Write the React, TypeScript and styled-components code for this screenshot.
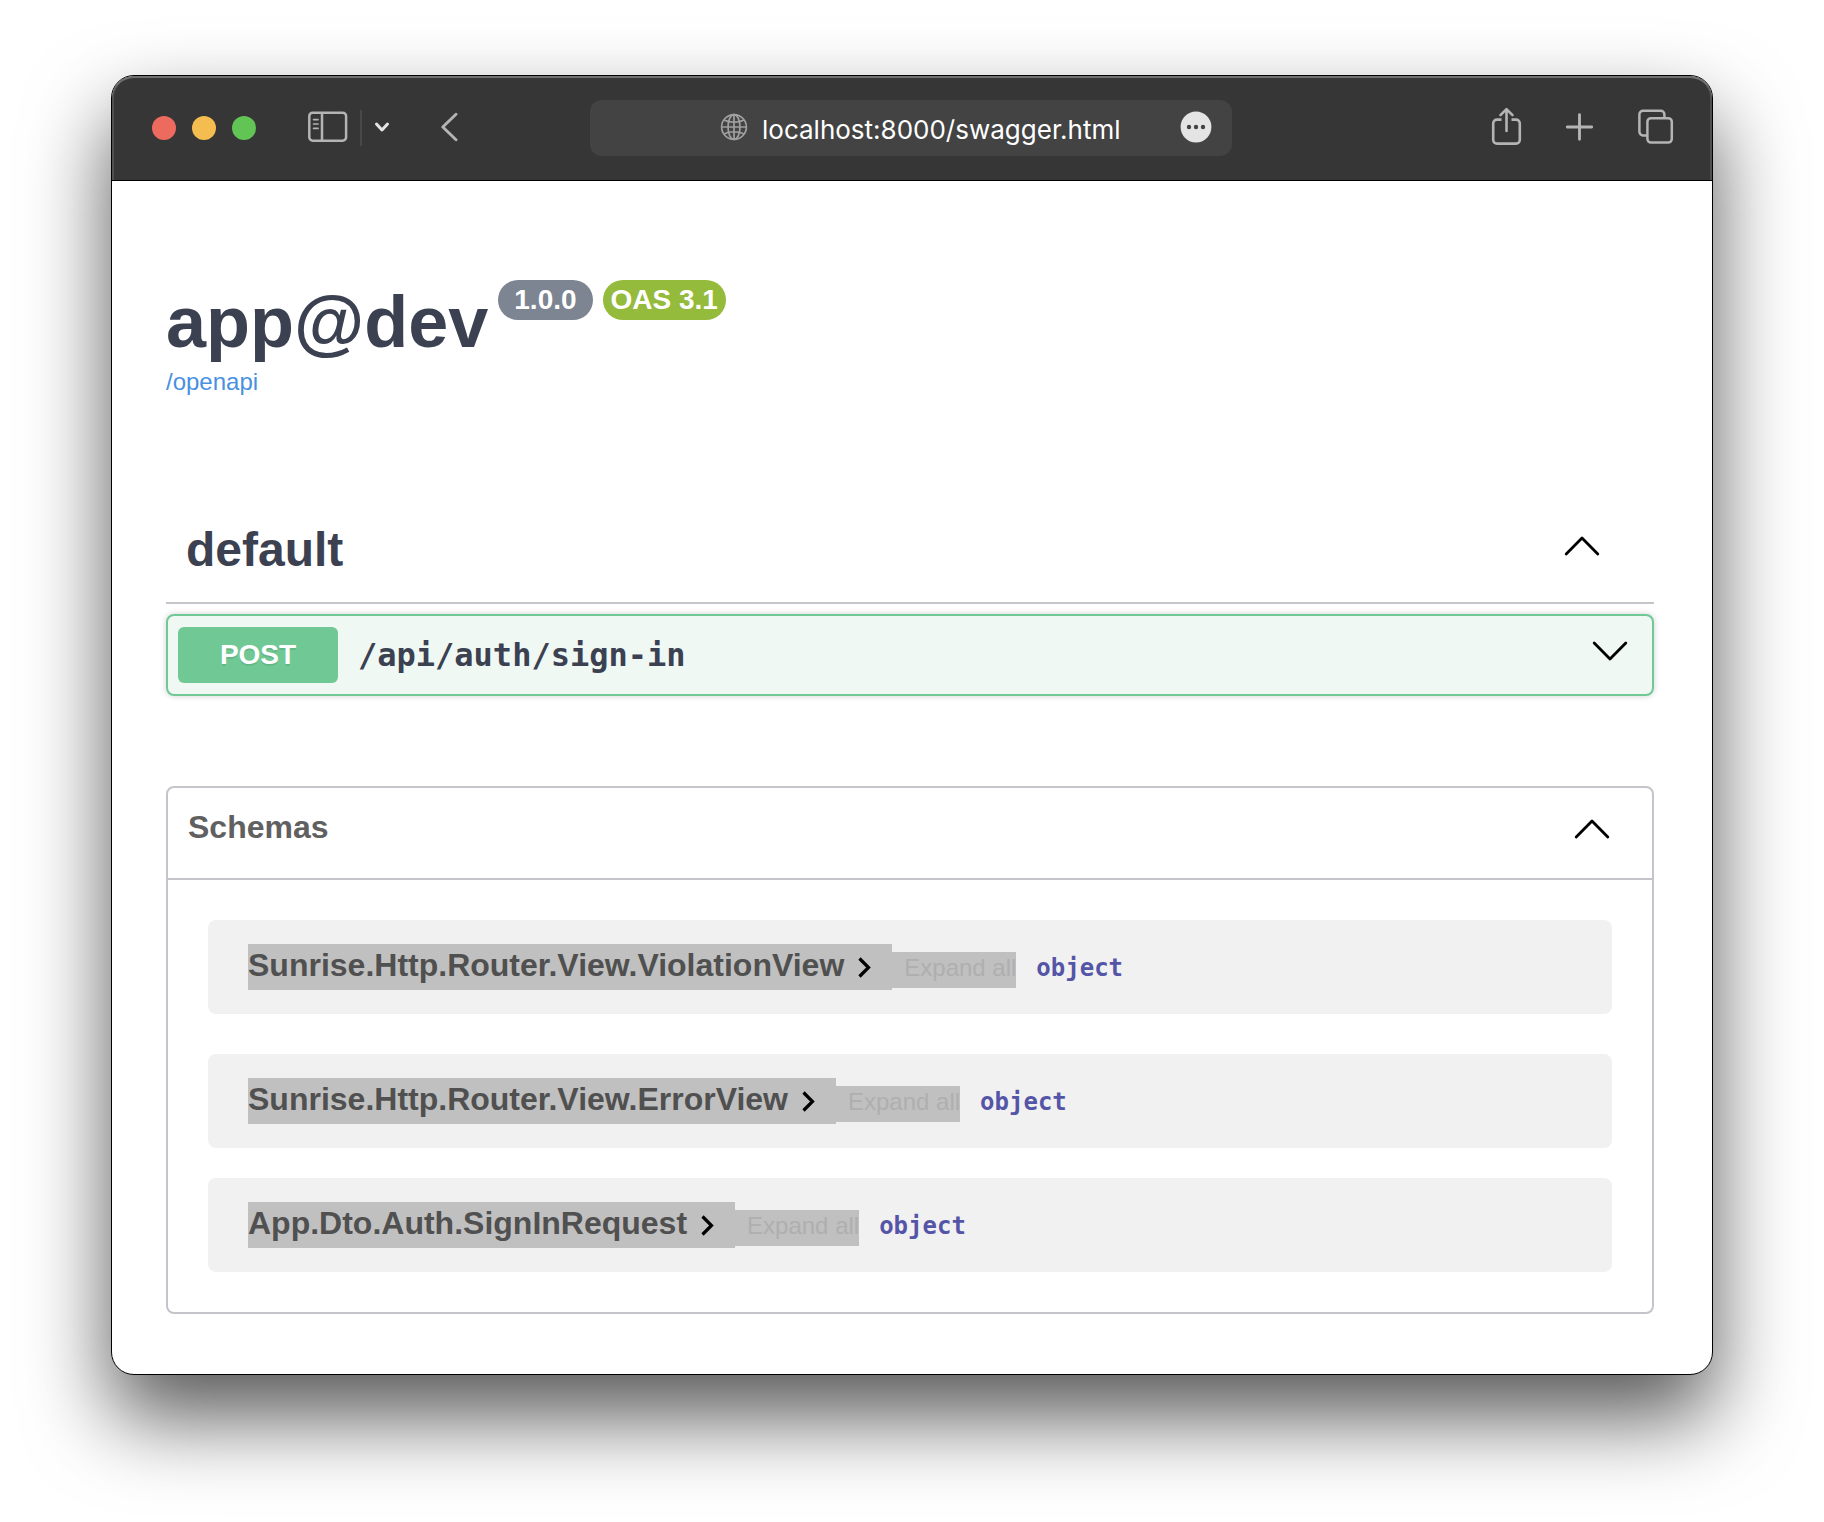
import React, { useState } from "react";
import styled, { createGlobalStyle } from "styled-components";

const sans = `"Liberation Sans", Arial, Helvetica, sans-serif`;
const mono = `"DejaVu Sans Mono", Menlo, monospace`;

const GlobalStyle = createGlobalStyle`
  *, *::before, *::after { box-sizing: border-box; }
  body { margin: 0; background: #fff; font-family: ${sans}; }
  button, input { font: inherit; color: inherit; }
  h1, h2, p { margin: 0; }
`;

const Desktop = styled.main`
  padding: 75px 111px 147px;
`;

const Window = styled.div`
  border: 1px solid #000;
  border-radius: 23px;
  overflow: hidden;
  background: #fff;
  box-shadow: 0 42px 84px rgba(0, 0, 0, 0.66);
`;

const Toolbar = styled.header`
  display: grid;
  grid-template-columns: 1fr minmax(0, 642px) 1fr;
  align-items: center;
  height: 105px;
  padding: 0 38px 0 36px;
  background: #363636;
  border-bottom: 1px solid #000;
  border-radius: 22px 22px 0 0;
  box-shadow: inset 0 2px 0 #707070, inset 2px 0 0 #505050, inset -2px 0 0 #505050;
  color: #b4b4b4;
`;

const ToolGroup = styled.div<{ $end?: boolean }>`
  display: flex;
  align-items: center;
  justify-content: ${(p) => (p.$end ? "flex-end" : "flex-start")};
`;

const TrafficLights = styled.div`
  display: flex;
  gap: 16px;
  margin: 0 52px 0 4px;
`;

const Light = styled.button<{ $color: string }>`
  width: 24px;
  height: 24px;
  padding: 0;
  border: 0;
  border-radius: 50%;
  background: ${(p) => p.$color};
`;

const ToolButton = styled.button<{ $gap?: number }>`
  display: flex;
  padding: 0 0 2px;
  border: 0;
  background: none;
  color: inherit;
  margin-left: ${(p) => p.$gap ?? 0}px;
  svg { display: block; }
`;

const Divider = styled.span`
  width: 2px;
  height: 36px;
  margin-left: 12px;
  background: #484848;
`;

const AddressBar = styled.div`
  display: grid;
  grid-template-columns: 1fr auto 1fr;
  align-items: center;
  height: 56px;
  padding: 0 20px;
  border-radius: 12px;
  background: #434343;
  color: #fff;
`;

const Address = styled.label`
  grid-column: 2;
  display: flex;
  align-items: center;
  gap: 14px;
  margin-left: 22px;
  svg { margin-bottom: 2px; }
`;

const AddressInput = styled.input`
  width: 362px;
  padding: 3px 0 0;
  border: 0;
  outline: 0;
  background: none;
  font: 400 26px/36px Inter, Roboto, sans-serif;
`;

const MoreButton = styled(ToolButton)`
  justify-self: end;
`;

const Page = styled.div`
  padding: 99px 58px 60px 54px;
`;

const TitleRow = styled.div`
  display: flex;
  align-items: flex-start;
  padding-bottom: 4px;
`;

const Title = styled.h1`
  font-size: 72px;
  line-height: 84px;
  color: #3b4151;
`;

const Badges = styled.div`
  display: flex;
  gap: 10px;
  margin-left: 10px;
`;

const Badge = styled.span<{ $color: string; $pad: number }>`
  padding: 0 ${(p) => p.$pad}px;
  border-radius: 20px;
  background: ${(p) => p.$color};
  color: #fff;
  font-size: 28px;
  line-height: 40px;
  font-weight: 700;
`;

const SpecLink = styled.a`
  display: inline-block;
  font-size: 24px;
  line-height: 28px;
  color: #4990e2;
  text-decoration: none;
`;

const TagHeader = styled.div`
  display: flex;
  align-items: center;
  justify-content: space-between;
  height: 106px;
  margin-top: 102px;
  padding: 0 52px 0 20px;
  border-bottom: 2px solid #c4c4cb;
`;

const TagTitle = styled.h2`
  font-size: 48px;
  line-height: 56px;
  color: #3b4151;
`;

const IconButton = styled.button`
  display: flex;
  padding: 0 0 8px;
  border: 0;
  background: none;
  color: #000;
  svg { display: block; }
`;

const Operation = styled.button`
  display: flex;
  align-items: center;
  width: 100%;
  margin-top: 10px;
  padding: 11px 22px 11px 10px;
  border: 2px solid #70c995;
  border-radius: 8px;
  background: #eff8f3;
  box-shadow: 0 0 6px rgba(0, 0, 0, 0.19);
  text-align: left;
  svg { display: block; margin: 0 0 8px auto; color: #000; }
`;

const Method = styled.span`
  width: 160px;
  border-radius: 6px;
  background: #70c995;
  color: #fff;
  font-size: 28px;
  line-height: 56px;
  font-weight: 700;
  text-align: center;
  text-shadow: 0 2px 0 rgba(0, 0, 0, 0.1);
`;

const Path = styled.span`
  margin-left: 20px;
  font: 700 32px/40px ${mono};
  color: #3b4151;
`;

const Schemas = styled.section`
  margin-top: 90px;
  border: 2px solid #c4c4cb;
  border-radius: 8px;
`;

const SchemasHeader = styled.div`
  display: flex;
  align-items: center;
  justify-content: space-between;
  height: 92px;
  padding: 0 40px 0 20px;
  border-bottom: 2px solid #c4c4cb;
`;

const SchemasTitle = styled.h2`
  padding-bottom: 12px;
  font-size: 32px;
  line-height: 36px;
  color: #606060;
`;

const SchemaList = styled.div`
  padding: 40px;
`;

const SchemaRow = styled.article<{ $gap: number }>`
  display: flex;
  align-items: center;
  height: 94px;
  margin-bottom: ${(p) => p.$gap}px;
  padding: 0 40px;
  border-radius: 8px;
  background: #f1f1f1;
`;

const SchemaName = styled.button`
  display: flex;
  align-items: center;
  height: 46px;
  padding: 0 16px 0 0;
  border: 0;
  background: #c0c0c0;
  color: #505050;
  font-size: 32px;
  line-height: 42px;
  font-weight: 700;
  svg { display: block; margin-left: 8px; color: #000; }
`;

const SchemaLabel = styled.span`
  padding-bottom: 4px;
`;

const ExpandAll = styled.button`
  height: 36px;
  margin-top: 6px;
  padding: 0 0 4px 12px;
  border: 0;
  background: #c0c0c0;
  color: #afafaf;
  font-size: 24px;
  line-height: 28px;
`;

const TypeName = styled.span`
  margin: 2px 0 0 20px;
  font: 700 24px/28px ${mono};
  color: #5555a8;
`;

const Chevron = ({ down }: { down?: boolean }) => (
  <svg width="40" height="40" viewBox="0 0 40 40" fill="none" stroke="currentColor" strokeWidth="2.8" strokeLinecap="round" strokeLinejoin="round" aria-hidden="true">
    <path d={down ? "M4.200 12 20 28 35.800 12" : "M4.200 28 20 12 35.800 28"} />
  </svg>
);

const SidebarIcon = () => (
  <svg width="40" height="32" viewBox="0 0 40 32" fill="none" stroke="currentColor" strokeWidth="2.5" strokeLinecap="round" aria-hidden="true">
    <rect x="1.300" y="1.700" width="36.800" height="28" rx="3.400" />
    <path d="M14 2v27.400" />
    <path d="M5.600 8.600h4.400M5.600 13h4.400M5.600 17.400h4.400" strokeWidth="1.700" />
  </svg>
);

const SmallChevron = () => (
  <svg width="16" height="12" viewBox="0 0 16 12" fill="none" stroke="#e4e4e4" strokeWidth="3" strokeLinecap="round" strokeLinejoin="round" aria-hidden="true">
    <path d="M2.500 3 8 9l5.500-6" />
  </svg>
);

const BackIcon = () => (
  <svg width="18" height="30" viewBox="0 0 18 30" fill="none" stroke="currentColor" strokeWidth="2.900" strokeLinecap="round" strokeLinejoin="round" aria-hidden="true">
    <path d="M16 2.200 2.800 15 16 27.800" />
  </svg>
);

const GlobeIcon = () => (
  <svg width="28" height="28" viewBox="0 0 28 28" fill="none" stroke="#a0a0a0" strokeWidth="1.700" aria-hidden="true">
    <circle cx="14" cy="14" r="12.400" />
    <ellipse cx="14" cy="14" rx="6" ry="12.400" />
    <path d="M14 1.600v24.800M1.600 14h24.800M4 7c5.500 3 14.500 3 20 0M4 21c5.500-3 14.500-3 20 0" />
  </svg>
);

const MoreIcon = () => (
  <svg width="32" height="32" viewBox="0 0 32 32" aria-hidden="true">
    <circle cx="16" cy="16" r="15.400" fill="#e4e4e4" />
    <g fill="#434343">
      <circle cx="9" cy="16" r="2.200" />
      <circle cx="16" cy="16" r="2.200" />
      <circle cx="23" cy="16" r="2.200" />
    </g>
  </svg>
);

const ShareIcon = () => (
  <svg width="32" height="40" viewBox="0 0 32 40" fill="none" stroke="currentColor" strokeWidth="2.600" strokeLinecap="round" strokeLinejoin="round" aria-hidden="true">
    <path d="M11.500 12.600H7a3.800 3.800 0 0 0-3.800 3.800v16.400A3.800 3.800 0 0 0 7 36.600h19a3.800 3.800 0 0 0 3.800-3.800V16.400A3.800 3.800 0 0 0 26 12.600h-4.500" strokeLinecap="butt" />
    <path d="M16.500 24V2.400M10.500 8.200 16.500 2.200 22.500 8.200" />
  </svg>
);

const PlusIcon = () => (
  <svg width="28" height="28" viewBox="0 0 28 28" fill="none" stroke="currentColor" strokeWidth="2.900" strokeLinecap="round" aria-hidden="true">
    <path d="M13.500 1.800v24.400M1.300 14h24.400" />
  </svg>
);

const TabsIcon = () => (
  <svg width="36" height="36" viewBox="0 0 36 36" fill="none" stroke="currentColor" strokeWidth="2.500" aria-hidden="true">
    <path d="M26.400 9V5.400a3.600 3.600 0 0 0-3.600-3.600H5A3.600 3.600 0 0 0 1.400 5.400v17.400A3.600 3.600 0 0 0 5 26.400h4" />
    <rect x="9.400" y="9.200" width="24.400" height="24.400" rx="3.600" />
  </svg>
);

const ModelArrow = () => (
  <svg width="24" height="24" viewBox="0 0 24 24" fill="none" stroke="currentColor" strokeWidth="3.200" aria-hidden="true">
    <path d="M7.500 3.500 16.500 12.500 7.500 21.500" />
  </svg>
);

const schemas = [
  { name: "Sunrise.Http.Router.View.ViolationView", gap: 40 },
  { name: "Sunrise.Http.Router.View.ErrorView", gap: 30 },
  { name: "App.Dto.Auth.SignInRequest", gap: 0 },
];

export default function App() {
  const [url, setUrl] = useState("localhost:8000/swagger.html");
  return (
    <Desktop>
      <GlobalStyle />
      <Window>
        <Toolbar>
          <ToolGroup>
            <TrafficLights>
              <Light $color="#ed6a5e" aria-label="Close" />
              <Light $color="#f5bd4f" aria-label="Minimize" />
              <Light $color="#61c454" aria-label="Zoom" />
            </TrafficLights>
            <ToolButton aria-label="Sidebar"><SidebarIcon /></ToolButton>
            <Divider />
            <ToolButton $gap={12} aria-label="Tab groups"><SmallChevron /></ToolButton>
            <ToolButton $gap={50} aria-label="Back"><BackIcon /></ToolButton>
          </ToolGroup>
          <AddressBar>
            <Address>
              <GlobeIcon />
              <AddressInput aria-label="Address" value={url} onChange={(e) => setUrl(e.target.value)} />
            </Address>
            <MoreButton aria-label="Page options"><MoreIcon /></MoreButton>
          </AddressBar>
          <ToolGroup $end>
            <ToolButton aria-label="Share"><ShareIcon /></ToolButton>
            <ToolButton $gap={44} aria-label="New tab"><PlusIcon /></ToolButton>
            <ToolButton $gap={44} aria-label="Tab overview"><TabsIcon /></ToolButton>
          </ToolGroup>
        </Toolbar>
        <Page>
          <TitleRow>
            <Title>app@dev</Title>
            <Badges>
              <Badge $color="#7d8492" $pad={16}>1.0.0</Badge>
              <Badge $color="#95bb3c" $pad={8}>OAS 3.1</Badge>
            </Badges>
          </TitleRow>
          <SpecLink href="#openapi">/openapi</SpecLink>
          <TagHeader>
            <TagTitle>default</TagTitle>
            <IconButton aria-label="Collapse operations"><Chevron /></IconButton>
          </TagHeader>
          <Operation>
            <Method>POST</Method>
            <Path>/api/auth/sign-in</Path>
            <Chevron down />
          </Operation>
          <Schemas>
            <SchemasHeader>
              <SchemasTitle>Schemas</SchemasTitle>
              <IconButton aria-label="Collapse schemas"><Chevron /></IconButton>
            </SchemasHeader>
            <SchemaList>
              {schemas.map((s) => (
                <SchemaRow key={s.name} $gap={s.gap}>
                  <SchemaName><SchemaLabel>{s.name}</SchemaLabel><ModelArrow /></SchemaName>
                  <ExpandAll>Expand all</ExpandAll>
                  <TypeName>object</TypeName>
                </SchemaRow>
              ))}
            </SchemaList>
          </Schemas>
        </Page>
      </Window>
    </Desktop>
  );
}
